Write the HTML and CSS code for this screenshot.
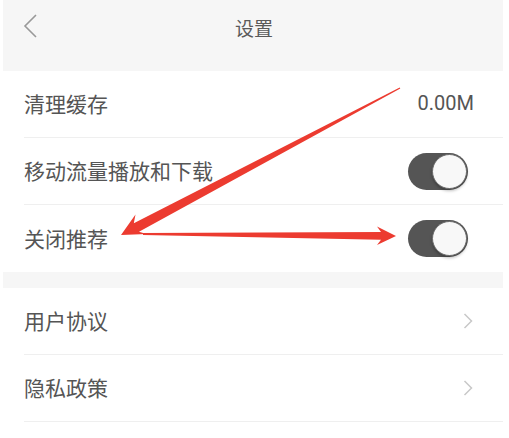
FILE: index.html
```html
<!DOCTYPE html>
<html lang="zh-CN">
<head>
<meta charset="utf-8">
<title>设置</title>
<link rel="stylesheet" href="styles.css">
</head>
<body>
<div class="app">
  <header class="topbar">
    <svg class="back" width="16" height="24" viewBox="0 0 16 24"><path d="M14 1 L3 12 L14 23" fill="none" stroke="#999" stroke-width="1.6"/></svg>
    <div class="title">设置</div>
  </header>
  <section class="group">
    <div class="row"><span class="label">清理缓存</span><span class="value">0.00M</span></div>
    <div class="row"><span class="label">移动流量播放和下载</span><span class="toggle"><span class="knob"></span></span></div>
    <div class="row"><span class="label">关闭推荐</span><span class="toggle"><span class="knob"></span></span></div>
  </section>
  <div class="gap"></div>
  <section class="group">
    <div class="row"><span class="label">用户协议</span><svg class="chev" width="10" height="16" viewBox="0 0 10 16"><path d="M1.5 1 L8.5 8 L1.5 15" fill="none" stroke="#c8c8c8" stroke-width="1.5"/></svg></div>
    <div class="row"><span class="label">隐私政策</span><svg class="chev" width="10" height="16" viewBox="0 0 10 16"><path d="M1.5 1 L8.5 8 L1.5 15" fill="none" stroke="#c8c8c8" stroke-width="1.5"/></svg></div>
  </section>
</div>
<svg class="marks" width="509" height="438" viewBox="0 0 509 438">
  <polygon fill="#ec3b30" points="399.7,87.5 133.8,223.2 135.5,214.5 121,235 146.5,234 139,231.8 400.3,88.5"/>
  <polygon fill="#ec3b30" points="143,233 381,232 377,226.5 396,236 377,245 381,239.8 143,235"/>
</svg>
</body>
</html>
```
FILE: styles.css
```css
html, body {
  margin: 0;
  padding: 0;
  background: #fff;
}
body {
  width: 509px;
  height: 438px;
  overflow: hidden;
  position: relative;
  font-family: "Noto Sans CJK SC", "Noto Sans", sans-serif;
}
.app {
  margin: 0 6px 0 3px;
}
.topbar {
  height: 71px;
  background: #f6f6f6;
  display: flex;
  align-items: center;
  justify-content: center;
  position: relative;
}
.back {
  position: absolute;
  left: 19px;
  top: 14px;
}
.title {
  font-size: 19px;
  color: #5a5a5a;
  margin-top: -16px;
  margin-left: 2px;
}
.group {
  padding-left: 21px;
}
.row {
  height: 66px;
  display: flex;
  align-items: center;
  justify-content: space-between;
  border-bottom: 1px solid #efefef;
  padding-right: 35px;
}
.group:first-of-type .row:last-child {
  border-bottom: none;
  height: 67px;
}
.label {
  font-size: 21px;
  color: #555;
  margin-top: -2px;
}
.value {
  font-family: "Roboto", "Noto Sans", sans-serif;
  font-size: 20px;
  color: #555;
  margin-right: -6px;
  margin-top: -2px;
}
.toggle {
  width: 60px;
  height: 37px;
  border-radius: 19px;
  background: #555;
  position: relative;
  display: block;
}
.knob {
  position: absolute;
  right: 1px;
  top: 1px;
  width: 33px;
  height: 33px;
  border-radius: 50%;
  background: #f8f8f8;
  border: 1px solid #6a6a6a;
  box-shadow: 0 2px 3px rgba(0,0,0,0.25);
}
.chev {
  margin-right: -5px;
}
.gap {
  height: 16px;
  background: #f6f6f6;
}
.marks {
  position: absolute;
  left: 0;
  top: 0;
  pointer-events: none;
}
```
